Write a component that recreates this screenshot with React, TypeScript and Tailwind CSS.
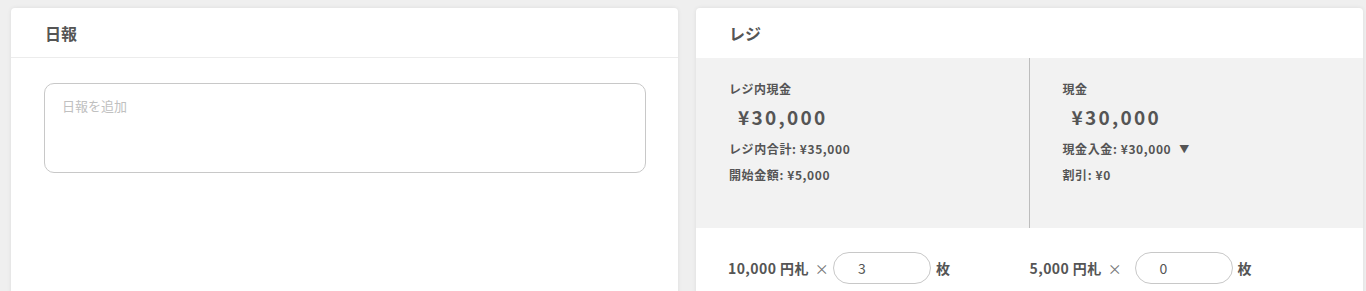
const font = { fontFamily: '"Noto Sans CJK JP", "Noto Sans", sans-serif' };

const Bill = ({ label, count }: { label: string; count: string }) => (
  <div className="flex items-center">
    <div className="w-[105px] flex items-center text-[14px] font-bold text-[#555] tracking-[0.03em]">
      {label}
      <span className="ml-[6px] font-normal text-[#777]">×</span>
    </div>
    <div className="w-[98px] h-[32px] rounded-full border border-[#c8c8c8] bg-white flex items-center pl-[24px] text-[14px] text-[#555]">
      {count}
    </div>
    <span className="ml-[5px] text-[14px] font-bold text-[#555]">枚</span>
  </div>
);

const Stat = ({ title, amount, lines }: { title: string; amount: string; lines: React.ReactNode[] }) => (
  <div className="pl-[33px] pt-[22px]">
    <div className="text-[12px] font-bold text-[#555] leading-[18px] tracking-[0.04em]">{title}</div>
    <div className="pl-[9px] mt-[6px] text-[19px] font-bold text-[#555] tracking-[0.12em] leading-[26px]">
      {amount}
    </div>
    <div className="mt-[10px] flex flex-col gap-[8px]">
      {lines.map((l, i) => (
        <div key={i} className="text-[12px] font-bold text-[#555] leading-[18px] tracking-[0.05em] flex items-center">
          {l}
        </div>
      ))}
    </div>
  </div>
);

const App = () => {
  return (
    <main style={font} className="h-[291px] overflow-hidden bg-[#efefef] flex gap-[18px] pl-[11px] pt-[8px]">
      <section className="w-[667px] h-[300px] bg-white rounded-[4px] shadow-[0_0_4px_rgba(0,0,0,0.08)]">
        <div className="h-[50px] border-b border-[#ececec] flex items-center pl-[34px] text-[16px] font-bold text-[#555]">
          日報
        </div>
        <div className="pt-[25px] pl-[33px]">
          <textarea
            placeholder="日報を追加"
            className="w-[602px] h-[90px] resize-none rounded-[10px] border border-[#c8c8c8] px-[17px] py-[12px] text-[13px] text-[#555] placeholder:text-[#c0c0c0] outline-none"
          />
        </div>
      </section>
      <section className="w-[667px] h-[300px] bg-white rounded-[4px] shadow-[0_0_4px_rgba(0,0,0,0.08)] overflow-hidden">
        <div className="h-[50px] flex items-center pl-[33px] text-[16px] font-bold text-[#555]">
          レジ
        </div>
        <div className="h-[170px] bg-[#f2f2f2] grid grid-cols-2">
          <div className="border-r border-[#bdbdbd]">
            <Stat
              title="レジ内現金"
              amount="¥30,000"
              lines={["レジ内合計: ¥35,000", "開始金額: ¥5,000"]}
            />
          </div>
          <div>
            <Stat
              title="現金"
              amount="¥30,000"
              lines={[
                <>
                  現金入金: ¥30,000
                  <span className="ml-[8px] text-[10px]">▼</span>
                </>,
                "割引: ¥0",
              ]}
            />
          </div>
        </div>
        <div className="grid grid-cols-2 pt-[24px]">
          <div className="pl-[32px]">
            <Bill label="10,000 円札" count="3" />
          </div>
          <div>
            <Bill label="5,000 円札" count="0" />
          </div>
        </div>
      </section>
    </main>
  );
};

export default App;
